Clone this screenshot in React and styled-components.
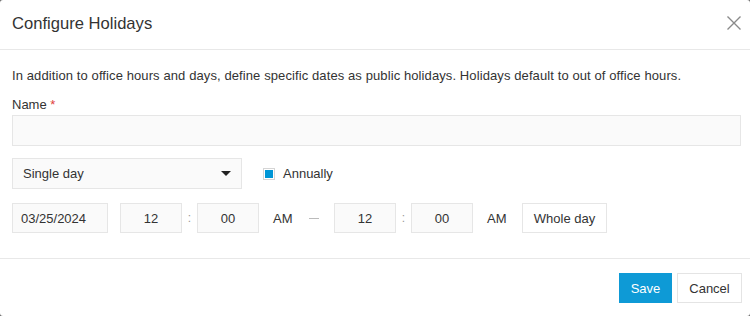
import React from "react";
import styled, { createGlobalStyle } from "styled-components";

const Global = createGlobalStyle`
  html, body { margin: 0; padding: 0; background: #6b6b6b; }
  body { font-family: "Liberation Sans", Arial, sans-serif; color: #333; }
  * { box-sizing: border-box; }
`;

const Modal = styled.div`
  width: 750px;
  height: 316px;
  background: #fff;
  border-radius: 3px;
  display: flex;
  flex-direction: column;
  overflow: hidden;
`;

const Header = styled.div`
  height: 50px;
  border-bottom: 1px solid #e8e8e8;
  display: flex;
  align-items: center;
  justify-content: space-between;
  padding: 0 6px 2px 12px;
`;

const Title = styled.h1`
  margin: 0;
  font-size: 16.6px;
  font-weight: normal;
  color: #333;
`;

const Close = styled.button`
  border: none;
  background: none;
  padding: 0;
  width: 20px;
  height: 20px;
  display: flex;
  align-items: center;
  justify-content: center;
  cursor: pointer;
  margin-top: -2px;
`;

const Body = styled.div`
  padding: 16px 9px 0 12px;
  display: flex;
  flex-direction: column;
  height: 209px;
  border-bottom: 1px solid #e8e8e8;
`;

const Desc = styled.p`
  margin: 0;
  font-size: 13px;
  line-height: 19px;
  letter-spacing: 0.1px;
  color: #333;
`;

const Label = styled.label`
  margin-top: 12px;
  font-size: 13px;
  line-height: 16px;
  color: #333;
`;

const Req = styled.span`
  color: #e0403a;
`;

const TextInput = styled.div`
  margin-top: 2px;
  height: 31px;
  background: #fafafa;
  border: 1px solid #e6e6e6;
`;

const Row = styled.div`
  display: flex;
  align-items: center;
  margin-top: ${(p) => p.$mt}px;
`;

const Select = styled.div`
  width: 230px;
  height: 31px;
  border: 1px solid #e6e6e6;
  background: #fafafa;
  display: flex;
  align-items: center;
  justify-content: space-between;
  padding: 0 10px 0 10px;
  font-size: 13px;
`;

const Caret = styled.span`
  width: 0;
  height: 0;
  border-left: 5px solid transparent;
  border-right: 5px solid transparent;
  border-top: 5px solid #222;
`;

const Check = styled.span`
  margin-left: 21px;
  width: 12px;
  height: 12px;
  border: 1px solid #d5d5d5;
  background: #0096d6;
  box-shadow: inset 0 0 0 1px #fff;
`;

const CheckLabel = styled.span`
  margin-left: 8px;
  font-size: 13px;
`;

const Box = styled.div`
  width: ${(p) => p.$w}px;
  height: 30px;
  border: 1px solid #e6e6e6;
  background: #fafafa;
  display: flex;
  align-items: center;
  justify-content: ${(p) => (p.$left ? "flex-start" : "center")};
  padding: 0 ${(p) => (p.$left ? 8 : 0)}px;
  font-size: 13px;
  margin-left: ${(p) => p.$ml || 0}px;
`;

const Colon = styled.span`
  width: 15px;
  text-align: center;
  font-size: 12px;
  color: #999;
`;

const Ampm = styled.span`
  margin-left: 14px;
  width: 22px;
  font-size: 13px;
`;

const Dash = styled.span`
  margin-left: 14px;
  width: 10px;
  height: 1px;
  background: #bbb;
`;

const WholeDay = styled.button`
  margin-left: 13px;
  height: 30px;
  width: 85px;
  border: 1px solid #e6e6e6;
  background: #fff;
  font-family: inherit;
  font-size: 13px;
  color: #333;
  padding: 0;
`;

const Footer = styled.div`
  flex: 1;
  display: flex;
  justify-content: flex-end;
  align-items: flex-start;
  padding: 14px 8px 0 0;
  gap: 5px;
`;

const Btn = styled.button`
  height: 30px;
  padding: 0;
  font-family: inherit;
  font-size: 13px;
  border: 1px solid ${(p) => (p.$primary ? "#0e9ad6" : "#e4e4e4")};
  background: ${(p) => (p.$primary ? "#0e9ad6" : "#fff")};
  color: ${(p) => (p.$primary ? "#fff" : "#333")};
  width: ${(p) => (p.$primary ? 53 : 65)}px;
`;

export default function App() {
  return (
    <>
      <Global />
      <Modal>
        <Header>
          <Title>Configure Holidays</Title>
          <Close aria-label="close">
            <svg width="16" height="16" viewBox="0 0 16 16">
              <path d="M1.5 1.5 L14.5 14.5 M14.5 1.5 L1.5 14.5" stroke="#8a8a8a" strokeWidth="1.4" fill="none" />
            </svg>
          </Close>
        </Header>
        <Body>
          <Desc>
            In addition to office hours and days, define specific dates as public holidays. Holidays default to out of office hours.
          </Desc>
          <Label>
            Name <Req>*</Req>
          </Label>
          <TextInput />
          <Row $mt={12}>
            <Select>
              <span>Single day</span>
              <Caret />
            </Select>
            <Check />
            <CheckLabel>Annually</CheckLabel>
          </Row>
          <Row $mt={14}>
            <Box $w={96} $left>03/25/2024</Box>
            <Box $w={62} $ml={12}>12</Box>
            <Colon>:</Colon>
            <Box $w={62}>00</Box>
            <Ampm>AM</Ampm>
            <Dash />
            <Box $w={62} $ml={15}>12</Box>
            <Colon>:</Colon>
            <Box $w={62}>00</Box>
            <Ampm>AM</Ampm>
            <WholeDay>Whole day</WholeDay>
          </Row>
        </Body>
        <Footer>
          <Btn $primary>Save</Btn>
          <Btn>Cancel</Btn>
        </Footer>
      </Modal>
    </>
  );
}
